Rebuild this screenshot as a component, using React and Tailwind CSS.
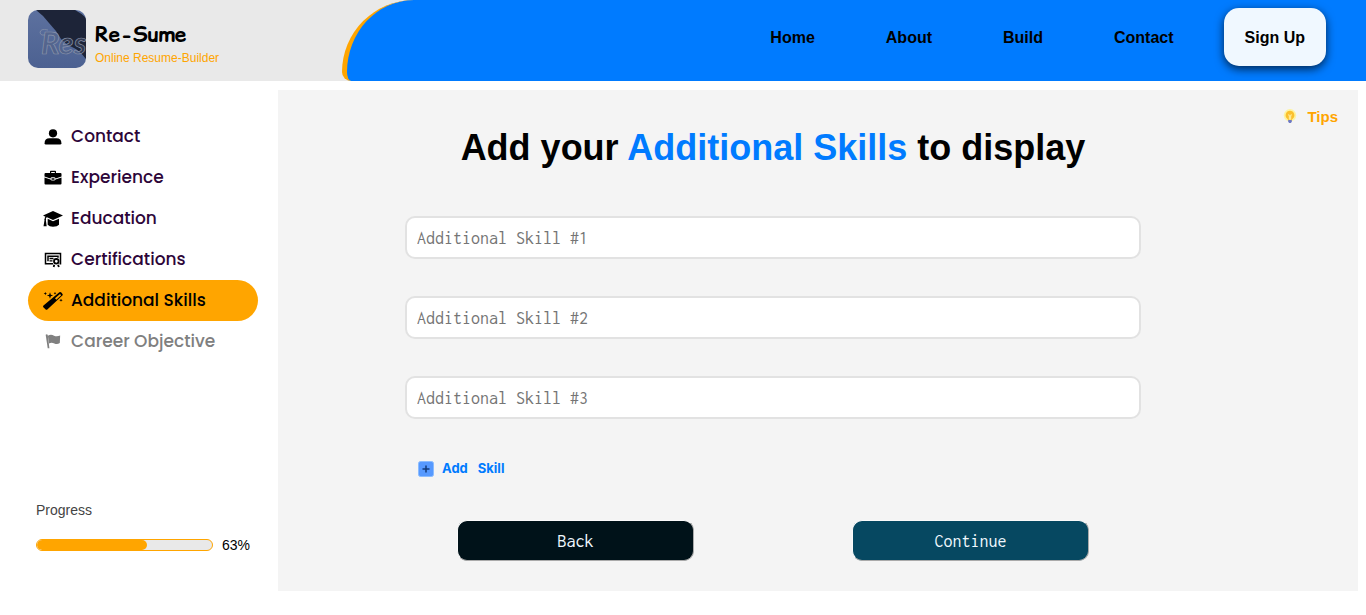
function PersonIcon() {
  return (
    <svg viewBox="0 0 18 16" className="h-4 w-[18px]" fill="currentColor" aria-hidden="true">
      <circle cx="9" cy="4.300" r="4.100" />
      <path d="M.6 14.200Q.6 9.300 5.500 9.300h7q4.900 0 4.900 4.900 0 1.300-1.300 1.300H1.900Q.6 15.500.6 14.200z" />
    </svg>
  );
}

function BriefcaseIcon() {
  return (
    <svg viewBox="0 0 18 16" className="h-4 w-[18px]" fill="currentColor" aria-hidden="true">
      <path d="M6 1.500Q6 .8 6.800 .8h4.400q.8 0 .8.700V3h4.500q1 0 1 1v2.400L11.600 8.600Q11.200 7.300 10 7.300H8Q6.800 7.300 6.400 8.600L.5 6.400V4q0-1 1-1H6zM7.200 2v1h3.600V2z" fillRule="evenodd" />
      <path d="M.5 7.400l6 2.200q.4 1 1.500 1h2q1.100 0 1.500-1l6-2.200v6.200q0 1-1 1h-15q-1 0-1-1z" />
      <rect x="7.300" y="8.200" width="3.400" height="1.500" rx=".7" />
    </svg>
  );
}

function CapIcon() {
  return (
    <svg viewBox="0 0 60 48" className="h-4 w-5" fill="currentColor" aria-hidden="true">
      <path d="M30 0L60 13.500 30 27 12 19q-3 1-3.500 4.500Q10 25 8.700 27.500L11 46H1.500L4.500 27.500q-1.500-2.500.5-4.500 0-4 2.500-6L0 13.500z" />
      <path d="M14 23.500l16 7 18-7V41q-5 6-18 6.500Q19 47 14 41z" />
    </svg>
  );
}

function CertificateIcon() {
  return (
    <svg viewBox="0 0 18 16" className="h-4 w-[18px]" fill="none" stroke="currentColor" aria-hidden="true">
      <path d="M9 11.700H1.500V1.500h15v10.200h-1" strokeWidth="1.500" />
      <path d="M4 9.300V4.200h10v1.500" strokeWidth="1.500" />
      <path d="M5.500 6.500h4M5.500 8.800h3" strokeWidth="1.300" />
      <circle cx="12.300" cy="9.300" r="2.300" strokeWidth="1.800" fill="#fff" />
      <path d="M10.200 12.800l-.5 2.200M14 12.800l.9 2.200" strokeWidth="1.800" />
    </svg>
  );
}

function WandIcon() {
  return (
    <svg viewBox="0 0 60 54" className="h-[18px] w-5" fill="currentColor" aria-hidden="true">
      <path d="M49 1q3.500-2 6 .5l3 3.500q2.500 3 0 5.500L13 52.500q-2.500 2-5 0l-7-7q-2-2.500.5-5zM51 6L36 19l4 4.500L54.500 9.500z" fillRule="evenodd" />
      <path d="M21 1l2.500 7 7 2.500-7 2.500L21 20l-2.500-7-7-2.500 7-2.500z" />
      <path d="M7 0l1.500 3L12 4.500 8.500 6 7 9.500 5.500 6 2 4.500 5.500 3zM36 0l1.200 2.500L40 4l-2.800 1.300L36 8l-1.200-2.700L32 4l2.800-1.500zM54 20l1.500 3 3.500 1.500-3.500 1.500L54 29.500 52.500 26 49 24.500l3.500-1.500z" />
    </svg>
  );
}

function FlagIcon() {
  return (
    <svg viewBox="0 0 46 44" className="h-[15px] w-4" fill="currentColor" aria-hidden="true">
      <path d="M1.500 2q3-3 6 0l5 39.500h-5z" />
      <path d="M8 5q9-5 18 0 8 3.500 18-.5l-1 22q-8 5-16 1-8-3.500-16 0z" />
    </svg>
  );
}

function BulbIcon() {
  return (
    <svg viewBox="0 0 14 16" className="h-4 w-3.5" aria-hidden="true">
      <circle cx="7" cy="6.300" r="6.200" fill="#fdf3a0" />
      <path d="M7 1.800a4.500 4.500 0 0 0-2.700 8q.8.700.8 1.500h3.800q0-.8.800-1.500A4.500 4.500 0 0 0 7 1.800z" fill="#fbc02d" />
      <path d="M5.400 5.500l1 1.200v4M8.600 5.500l-1 1.200v4" fill="none" stroke="#fde995" strokeWidth="1.200" />
      <path d="M5.200 11h3.600v1.800L7.800 14H6.200l-1-1.200z" fill="#6d78c4" />
    </svg>
  );
}

function Logo() {
  return (
    <svg viewBox="0 0 58 58" className="size-[58px] shrink-0 rounded-[10px]" role="img" aria-label="Re-Sume logo">
      <defs>
        <linearGradient id="logo-sky" x1="0" y1="0" x2="0" y2="1">
          <stop offset="0" stopColor="#5d719f" />
          <stop offset="1" stopColor="#4c6191" />
        </linearGradient>
      </defs>
      <rect width="58" height="58" fill="url(#logo-sky)" />
      <path d="M8 0h39q6 3 11 8v41Q52 41 46 38 37 34 33 29 28 20 21 13 15 5 8 0z" fill="#1d2438" />
      <text x="13" y="44" fontSize="31" fontWeight="700" fontStyle="italic" fontFamily="Lato, sans-serif" fill="#56617c" fillOpacity=".35" stroke="#8a94aa" strokeWidth=".7">
        Res
      </text>
      <path d="M20 20q-8-2-8 3 1 3 5 2" fill="none" stroke="#8a94aa" strokeWidth=".7" />
    </svg>
  );
}

const steps = [
  { label: "Contact", icon: <PersonIcon /> },
  { label: "Experience", icon: <BriefcaseIcon /> },
  { label: "Education", icon: <CapIcon /> },
  { label: "Certifications", icon: <CertificateIcon /> },
  { label: "Additional Skills", icon: <WandIcon />, state: "current" },
  { label: "Career Objective", icon: <FlagIcon />, state: "upcoming" },
];

const stepColors = {
  done: "text-[#2d0539]",
  current: "bg-[#ffa500] text-black",
  upcoming: "text-[#808080]",
};

const iconColors = {
  done: "text-black",
  current: "text-black",
  upcoming: "text-[#808080]",
};

const skills = [1, 2, 3];
const progress = 63;

function Header() {
  return (
    <header className="flex h-[81px] bg-[#e9e9e9] font-['Liberation_Sans',Arial,sans-serif]">
      <a href="#" className="flex w-1/4 items-start gap-[9px] pt-2.5 pl-7">
        <Logo />
        <span className="flex flex-col pt-2.5">
          <span className="font-['Comic_Sans_MS','Comic_Relief',cursive] text-[21px] leading-[30px] font-black">Re-Sume</span>
          <span className="text-xs leading-4 text-[#ffa500]">Online Resume-Builder</span>
        </span>
      </a>
      <nav className="flex w-3/4 items-center justify-end gap-[50px] rounded-tl-[80px] rounded-bl-[10px] border-l-[5px] border-[#ffa500] bg-[#007bff] pr-10 pb-[7px] font-bold">
        <div className="flex gap-[71px] pt-0.5">
          <a href="#">Home</a>
          <a href="#">About</a>
          <a href="#">Build</a>
          <a href="#">Contact</a>
        </div>
        <a href="#" className="rounded-[15px] bg-[#f0f8ff] px-[21px] pt-[18px] pb-4 shadow-[0_3px_10px_rgba(0,0,0,0.7)]">
          Sign Up
        </a>
      </nav>
    </header>
  );
}

function Sidebar() {
  return (
    <aside className="flex w-[278px] shrink-0 flex-col justify-between pt-[26px] pr-5 pb-9 pl-7">
      <ol className="font-[Poppins,Inter,sans-serif] font-medium">
        {steps.map(({ label, icon, state = "done" }) => (
          <li key={label}>
            <a href="#" className={`flex h-[41px] items-center gap-2 rounded-full pl-[15px] text-[17px] ${stepColors[state]}`}>
              <span className={`flex w-5 justify-center ${iconColors[state]}`}>{icon}</span>
              {label}
            </a>
          </li>
        ))}
      </ol>
      <div className="px-2 font-['Liberation_Sans',Arial,sans-serif] text-sm">
        <p id="progress-label" className="text-[#444]">Progress</p>
        <div className="mt-[15px] flex items-center gap-[9px]">
          <div role="progressbar" aria-labelledby="progress-label" aria-valuenow={progress} className="h-3 flex-1 overflow-hidden rounded-full border border-[#ffa500] bg-[#e9e9e9]">
            <div className="h-full rounded-full bg-[#ffa500]" style={{ width: `${progress}%` }} />
          </div>
          <span>{progress}%</span>
        </div>
      </div>
    </aside>
  );
}

export default function App() {
  return (
    <div className="bg-white text-black">
      <Header />
      <div className="flex pt-[9px] pr-2 pb-6">
        <Sidebar />
        <main className="flex min-h-[501px] flex-1 bg-[#f4f4f4]">
          <form className="flex flex-1 flex-col items-center pt-[37px]">
            <h1 className="font-['Liberation_Sans',Arial,sans-serif] text-4xl leading-[42px] font-bold">
              Add your <span className="text-[#007bff]">Additional Skills</span> to display
            </h1>
            <div className="mt-[47px] flex w-full max-w-[736px] flex-col gap-[37px]">
              {skills.map((n) => (
                <input
                  key={n}
                  type="text"
                  aria-label={`Additional Skill #${n}`}
                  placeholder={`Additional Skill #${n}`}
                  className="h-[43px] w-full rounded-[10px] border-2 border-[#e2e2e2] bg-white px-2.5 font-[Inconsolata,'DejaVu_Sans_Mono',monospace] text-lg placeholder:text-[#757575]"
                />
              ))}
              <button type="button" className="ml-[13px] flex h-[26px] items-center gap-2 self-start font-[Inter,sans-serif] text-[13px] font-bold text-[#007bff]">
                <svg viewBox="0 0 16 16" className="size-4" aria-hidden="true">
                  <rect x=".5" y=".5" width="15" height="15" rx="2" fill="#5699ff" stroke="#8bbcff" />
                  <path d="M8 4.500v7M4.500 8h7" stroke="#123a7a" strokeWidth="1.500" />
                </svg>
                <span className="flex gap-2.5">
                  <span>Add</span> <span>Skill</span>
                </span>
              </button>
            </div>
            <div className="mt-[38px] flex w-full max-w-[632px] justify-between font-[Inconsolata,'DejaVu_Sans_Mono',monospace] text-lg text-[#f0f8ff]">
              <button type="button" className="flex h-[41px] w-[237px] items-center justify-center rounded-[10px] border border-t-[#fafafa] border-r-[#aaa] border-b-[#aaa] border-l-[#fafafa] bg-[#001219]">Back</button>
              <button type="submit" className="flex h-[41px] w-[237px] items-center justify-center rounded-[10px] border border-t-[#fafafa] border-r-[#aaa] border-b-[#aaa] border-l-[#fafafa] bg-[#064861]">Continue</button>
            </div>
          </form>
          <div className="flex w-[90px] justify-end pt-[17px] pr-5">
            <button type="button" className="flex h-5 items-center gap-2.5 font-['Liberation_Sans',Arial,sans-serif] text-[15px] font-bold text-[#ffa500]">
              <BulbIcon />
              Tips
            </button>
          </div>
        </main>
      </div>
    </div>
  );
}
